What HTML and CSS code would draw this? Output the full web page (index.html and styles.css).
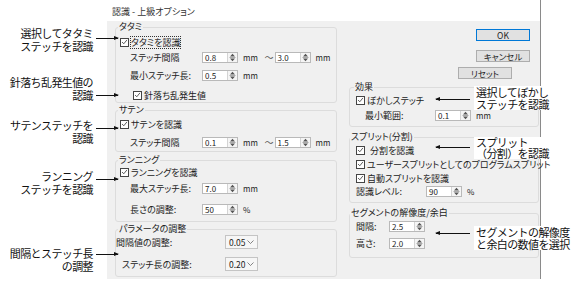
FILE: index.html
```html
<!DOCTYPE html>
<html lang="ja">
<head>
    <meta charset="UTF-8">
    <title>認識 - 上級オプション</title>
    <link rel="stylesheet" href="styles.css">
</head>
<body>
<div class="page">
    <div class="dialog">
        <div class="titlebar">認識 - 上級オプション</div>
        <div class="dlg-body">
            <!-- 左の列 -->
            <div class="col-left">
                <fieldset class="grp pb-0">
                    <legend>タタミ</legend>
                    <div class="row mt-3 ind-4">
                        <span class="cb"><svg viewBox="0 0 8 8" width="8" height="8"><path d="M1.2 4 L3.2 6 L6.8 1.6" fill="none" stroke="#333" stroke-width="0.9"/></svg></span>
                        <span class="focus">タタミを認識</span>
                    </div>
                    <div class="row mt-1 ind-14">
                        <span class="lbl w-72">ステッチ間隔</span>
                        <span class="spin"><span class="spin-val">0.8</span><span class="spin-btn"><svg viewBox="0 0 7 9" width="7" height="9"><path d="M3.5 0.8 L6 3.4 H1 Z M3.5 8.2 L6 5.6 H1 Z" fill="#555"/><path d="M0.5 4.5 H6.5" stroke="#777" stroke-width="0.6"/></svg></span></span>
                        <span class="unit">mm</span>
                        <span class="tilde">～</span>
                        <span class="spin"><span class="spin-val">3.0</span><span class="spin-btn"><svg viewBox="0 0 7 9" width="7" height="9"><path d="M3.5 0.8 L6 3.4 H1 Z M3.5 8.2 L6 5.6 H1 Z" fill="#555"/><path d="M0.5 4.5 H6.5" stroke="#777" stroke-width="0.6"/></svg></span></span>
                        <span class="unit">mm</span>
                    </div>
                    <div class="row mt-4 ind-14">
                        <span class="lbl w-72">最小ステッチ長:</span>
                        <span class="spin"><span class="spin-val">0.5</span><span class="spin-btn"><svg viewBox="0 0 7 9" width="7" height="9"><path d="M3.5 0.8 L6 3.4 H1 Z M3.5 8.2 L6 5.6 H1 Z" fill="#555"/><path d="M0.5 4.5 H6.5" stroke="#777" stroke-width="0.6"/></svg></span></span>
                        <span class="unit">mm</span>
                    </div>
                    <div class="row mt-6 ind-17">
                        <span class="cb"><svg viewBox="0 0 8 8" width="8" height="8"><path d="M1.2 4 L3.2 6 L6.8 1.6" fill="none" stroke="#333" stroke-width="0.9"/></svg></span>
                        <span>針落ち乱発生値</span>
                    </div>
                </fieldset>

                <fieldset class="grp mt-2 pb-2">
                    <legend>サテン</legend>
                    <div class="row mt-2 ind-4">
                        <span class="cb"><svg viewBox="0 0 8 8" width="8" height="8"><path d="M1.2 4 L3.2 6 L6.8 1.6" fill="none" stroke="#333" stroke-width="0.9"/></svg></span>
                        <span>サテンを認識</span>
                    </div>
                    <div class="row mt-4 ind-14">
                        <span class="lbl w-72">ステッチ間隔</span>
                        <span class="spin"><span class="spin-val">0.1</span><span class="spin-btn"><svg viewBox="0 0 7 9" width="7" height="9"><path d="M3.5 0.8 L6 3.4 H1 Z M3.5 8.2 L6 5.6 H1 Z" fill="#555"/><path d="M0.5 4.5 H6.5" stroke="#777" stroke-width="0.6"/></svg></span></span>
                        <span class="unit">mm</span>
                        <span class="tilde">～</span>
                        <span class="spin"><span class="spin-val">1.5</span><span class="spin-btn"><svg viewBox="0 0 7 9" width="7" height="9"><path d="M3.5 0.8 L6 3.4 H1 Z M3.5 8.2 L6 5.6 H1 Z" fill="#555"/><path d="M0.5 4.5 H6.5" stroke="#777" stroke-width="0.6"/></svg></span></span>
                        <span class="unit">mm</span>
                    </div>
                </fieldset>

                <fieldset class="grp mt-3 pb-5">
                    <legend>ランニング</legend>
                    <div class="row ind-4">
                        <span class="cb"><svg viewBox="0 0 8 8" width="8" height="8"><path d="M1.2 4 L3.2 6 L6.8 1.6" fill="none" stroke="#333" stroke-width="0.9"/></svg></span>
                        <span>ランニングを認識</span>
                    </div>
                    <div class="row mt-2 ind-14">
                        <span class="lbl w-72">最大ステッチ長:</span>
                        <span class="spin"><span class="spin-val">7.0</span><span class="spin-btn"><svg viewBox="0 0 7 9" width="7" height="9"><path d="M3.5 0.8 L6 3.4 H1 Z M3.5 8.2 L6 5.6 H1 Z" fill="#555"/><path d="M0.5 4.5 H6.5" stroke="#777" stroke-width="0.6"/></svg></span></span>
                        <span class="unit">mm</span>
                    </div>
                    <div class="row mt-7 ind-14">
                        <span class="lbl w-72">長さの調整:</span>
                        <span class="spin"><span class="spin-val">50</span><span class="spin-btn"><svg viewBox="0 0 7 9" width="7" height="9"><path d="M3.5 0.8 L6 3.4 H1 Z M3.5 8.2 L6 5.6 H1 Z" fill="#555"/><path d="M0.5 4.5 H6.5" stroke="#777" stroke-width="0.6"/></svg></span></span>
                        <span class="unit">%</span>
                    </div>
                </fieldset>

                <fieldset class="grp mt-2 pb-4">
                    <legend>パラメータの調整</legend>
                    <div class="row row-tall">
                        <span class="lbl w-109">間隔値の調整:</span>
                        <span class="combo"><span>0.05</span><svg viewBox="0 0 7 4" width="7" height="4"><path d="M0.5 0.5 L3.5 3.5 L6.5 0.5" fill="none" stroke="#666" stroke-width="0.8"/></svg></span>
                    </div>
                    <div class="row row-tall mt-6 ind-6">
                        <span class="lbl w-103">ステッチ長の調整:</span>
                        <span class="combo"><span>0.20</span><svg viewBox="0 0 7 4" width="7" height="4"><path d="M0.5 0.5 L3.5 3.5 L6.5 0.5" fill="none" stroke="#666" stroke-width="0.8"/></svg></span>
                    </div>
                </fieldset>
            </div>

            <!-- 右の列 -->
            <div class="col-right">
                <div class="btn btn-ok mt-7">OK</div>
                <div class="btn mt-9">キャンセル</div>
                <div class="btn btn-reset mt-5">リセット</div>

                <fieldset class="grp mt-3 pb-4">
                    <legend class="lg-5">効果</legend>
                    <div class="row mt-1 ind-6">
                        <span class="cb"><svg viewBox="0 0 8 8" width="8" height="8"><path d="M1.2 4 L3.2 6 L6.8 1.6" fill="none" stroke="#333" stroke-width="0.9"/></svg></span>
                        <span>ぼかしステッチ</span>
                    </div>
                    <div class="row mt-1 ind-15">
                        <span class="lbl w-70">最小範囲:</span>
                        <span class="spin"><span class="spin-val">0.1</span><span class="spin-btn"><svg viewBox="0 0 7 9" width="7" height="9"><path d="M3.5 0.8 L6 3.4 H1 Z M3.5 8.2 L6 5.6 H1 Z" fill="#555"/><path d="M0.5 4.5 H6.5" stroke="#777" stroke-width="0.6"/></svg></span></span>
                        <span class="unit">mm</span>
                    </div>
                </fieldset>

                <fieldset class="grp mt-5 pb-5">
                    <legend class="lg-0">スプリット(分割)</legend>
                    <div class="row mt-1 ind-6">
                        <span class="cb"><svg viewBox="0 0 8 8" width="8" height="8"><path d="M1.2 4 L3.2 6 L6.8 1.6" fill="none" stroke="#333" stroke-width="0.9"/></svg></span>
                        <span class="gap-l">分割を認識</span>
                    </div>
                    <div class="row ind-6">
                        <span class="cb"><svg viewBox="0 0 8 8" width="8" height="8"><path d="M1.2 4 L3.2 6 L6.8 1.6" fill="none" stroke="#333" stroke-width="0.9"/></svg></span>
                        <span>ユーザースプリットとしてのプログラムスプリット</span>
                    </div>
                    <div class="row ind-6">
                        <span class="cb"><svg viewBox="0 0 8 8" width="8" height="8"><path d="M1.2 4 L3.2 6 L6.8 1.6" fill="none" stroke="#333" stroke-width="0.9"/></svg></span>
                        <span>自動スプリットを認識</span>
                    </div>
                    <div class="row row-short ind-6">
                        <span class="lbl w-70">認識レベル:</span>
                        <span class="spin"><span class="spin-val">90</span><span class="spin-btn"><svg viewBox="0 0 7 9" width="7" height="9"><path d="M3.5 0.8 L6 3.4 H1 Z M3.5 8.2 L6 5.6 H1 Z" fill="#555"/><path d="M0.5 4.5 H6.5" stroke="#777" stroke-width="0.6"/></svg></span></span>
                        <span class="unit">%</span>
                    </div>
                </fieldset>

                <fieldset class="grp mt-5 pb-7">
                    <legend class="lg-0">セグメントの解像度/余白</legend>
                    <div class="row mt-1 ind-6">
                        <span class="lbl w-33">間隔:</span>
                        <span class="spin"><span class="spin-val">2.5</span><span class="spin-btn"><svg viewBox="0 0 7 9" width="7" height="9"><path d="M3.5 0.8 L6 3.4 H1 Z M3.5 8.2 L6 5.6 H1 Z" fill="#555"/><path d="M0.5 4.5 H6.5" stroke="#777" stroke-width="0.6"/></svg></span></span>
                    </div>
                    <div class="row mt-3 ind-6">
                        <span class="lbl w-33">高さ:</span>
                        <span class="spin"><span class="spin-val">2.0</span><span class="spin-btn"><svg viewBox="0 0 7 9" width="7" height="9"><path d="M3.5 0.8 L6 3.4 H1 Z M3.5 8.2 L6 5.6 H1 Z" fill="#555"/><path d="M0.5 4.5 H6.5" stroke="#777" stroke-width="0.6"/></svg></span></span>
                    </div>
                </fieldset>
            </div>
        </div>
    </div>

    <!-- 注釈 -->
    <div class="note note-l n-tatami">選択してタタミ<br>ステッチを認識</div>
    <div class="arrow arrow-l a-tatami"></div>
    <div class="note note-l n-random">針落ち乱発生値の<br>認識</div>
    <div class="arrow arrow-l a-random"></div>
    <div class="note note-l n-satin">サテンステッチを<br>認識</div>
    <div class="arrow arrow-l a-satin"></div>
    <div class="note note-l n-run">ランニング<br>ステッチを認識</div>
    <div class="arrow arrow-l a-run"></div>
    <div class="note note-l n-adjust">間隔とステッチ長<br>の調整</div>
    <div class="arrow arrow-l a-adjust"></div>

    <div class="note note-r n-blur">選択してぼかし<br>ステッチを認識</div>
    <div class="arrow arrow-r a-blur"></div>
    <div class="note note-r n-split">スプリット<br>（分割）を認識</div>
    <div class="arrow arrow-r a-split"></div>
    <div class="note note-r n-seg">セグメントの解像度<br>と余白の数値を選択</div>
    <div class="arrow arrow-r a-seg"></div>
</div>
</body>
</html>
```

FILE: styles.css
```css
body {
    margin: 0;
    background: #fff;
    font-family: "Noto Sans CJK JP", "Noto Sans", sans-serif;
}
.page {
    position: relative;
    width: 575px;
    height: 294px;
    overflow: hidden;
}

/* ダイアログ */
.dialog {
    margin-left: 107px;
    width: 434px;
    box-sizing: border-box;
    border-right: 1px solid #8a8a8a;
    font-size: 9px;
    font-feature-settings: "palt";
    color: #222;
}
.titlebar {
    height: 21px;
    padding-left: 5px;
    line-height: 24px;
    color: #333;
}
.dlg-body {
    height: 258px;
    box-sizing: border-box;
    padding: 1px 0 0 8px;
    background: #f0f0f0;
    display: flex;
    gap: 12px;
}
.col-left {
    width: 222px;
    display: flex;
    flex-direction: column;
}
.col-right {
    width: 190px;
    display: flex;
    flex-direction: column;
}

/* グループ枠 */
.grp {
    margin: 0;
    padding: 0;
    border: 1px solid #dcdcdc;
    border-radius: 3px;
    min-width: 0;
}
.grp legend {
    margin-left: 2px;
    padding: 0 1px;
    font-size: 9px;
    line-height: 10px;
}
.grp legend.lg-0 { margin-left: 0; }
.grp legend.lg-5 { margin-left: 4px; }

.row {
    display: flex;
    align-items: center;
    height: 14px;
    white-space: nowrap;
}
.row-tall { height: 16px; }
.row-short { height: 12px; }

.ind-4 { padding-left: 4px; }
.ind-6 { padding-left: 6px; }
.ind-14 { padding-left: 14px; }
.ind-15 { padding-left: 15px; }
.ind-17 { padding-left: 17px; }

.mt-1 { margin-top: 1px; }
.mt-2 { margin-top: 2px; }
.mt-3 { margin-top: 3px; }
.mt-4 { margin-top: 4px; }
.mt-5 { margin-top: 5px; }
.mt-6 { margin-top: 6px; }
.mt-7 { margin-top: 7px; }
.mt-9 { margin-top: 9px; }
.pb-0 { padding-bottom: 0; }
.pb-2 { padding-bottom: 2px; }
.pb-4 { padding-bottom: 4px; }
.pb-5 { padding-bottom: 5px; }
.pb-7 { padding-bottom: 7px; }

.lbl { flex: none; }
.w-33 { width: 33px; }
.w-70 { width: 70px; }
.w-72 { width: 72px; }
.w-103 { width: 103px; }
.w-109 { width: 109px; }

/* チェックボックス */
.cb {
    flex: none;
    width: 9px;
    height: 9px;
    box-sizing: border-box;
    margin-right: 2px;
    border: 1px solid #444;
    background: #fff;
    display: flex;
    align-items: center;
    justify-content: center;
}
.gap-l { margin-left: 3px; }
.focus {
    outline: 1px dotted #333;
    outline-offset: 0;
    line-height: 11px;
}

/* スピン入力 */
.spin {
    flex: none;
    display: flex;
    width: 36px;
    height: 11px;
    box-sizing: border-box;
    border: 1px solid #b9b9b9;
    background: #fff;
}
.spin-val {
    flex: 1;
    padding-left: 2px;
    font-size: 8px;
    line-height: 9px;
}
.spin-btn {
    width: 9px;
    border-left: 1px solid #d4d4d4;
    background: #f5f5f5;
    display: flex;
    align-items: center;
    justify-content: center;
}
.unit {
    margin-left: 5px;
    width: 22px;
    font-size: 8px;
}
.tilde {
    width: 12px;
    text-align: center;
    color: #555;
}

/* コンボボックス */
.combo {
    flex: none;
    width: 33px;
    height: 14px;
    box-sizing: border-box;
    padding: 0 3px;
    border: 1px solid #c4c4c4;
    background: #f6f6f6;
    display: flex;
    align-items: center;
    justify-content: space-between;
    font-size: 8.5px;
}

/* ボタン */
.btn {
    align-self: flex-end;
    margin-right: 9px;
    width: 54px;
    height: 12px;
    box-sizing: border-box;
    border: 1px solid #adadad;
    background: #e1e1e1;
    font-size: 8.5px;
    line-height: 10px;
    text-align: center;
}
.btn-ok {
    border-color: #0078d7;
}
.btn-reset {
    margin-right: 27px;
}

/* 注釈 */
.note {
    position: absolute;
    font-size: 11px;
    line-height: 13px;
    letter-spacing: -0.6px;
    color: #111;
    white-space: nowrap;
}
.note-l {
    right: 482px;
    text-align: right;
}
.note-r {
    left: 474px;
    padding: 0 3px 0 2px;
    line-height: 12px;
    background: #fff;
}
.n-tatami { top: 27px; }
.n-random { top: 76px; }
.n-satin { top: 119px; }
.n-run { top: 170px; }
.n-adjust { top: 247px; }
.n-blur { top: 86px; }
.n-split { top: 137px; line-height: 11px; }
.n-seg { top: 226px; }

.arrow {
    position: absolute;
    height: 1px;
    background: #111;
}
.arrow::after {
    content: "";
    position: absolute;
    top: -2px;
    border-top: 2.5px solid transparent;
    border-bottom: 2.5px solid transparent;
}
.arrow-l {
    left: 96px;
    width: 22px;
}
.arrow-l::after {
    right: -1px;
    border-left: 5px solid #111;
}
.arrow-r {
    left: 436px;
    width: 34px;
}
.arrow-r::after {
    left: -1px;
    border-right: 5px solid #111;
}
.a-tatami { top: 38px; }
.a-random { top: 95px; }
.a-satin { top: 128px; }
.a-run { top: 179px; }
.a-adjust { top: 254px; }
.a-blur { top: 99px; }
.a-split { top: 147px; }
.a-seg { top: 233px; }
```
